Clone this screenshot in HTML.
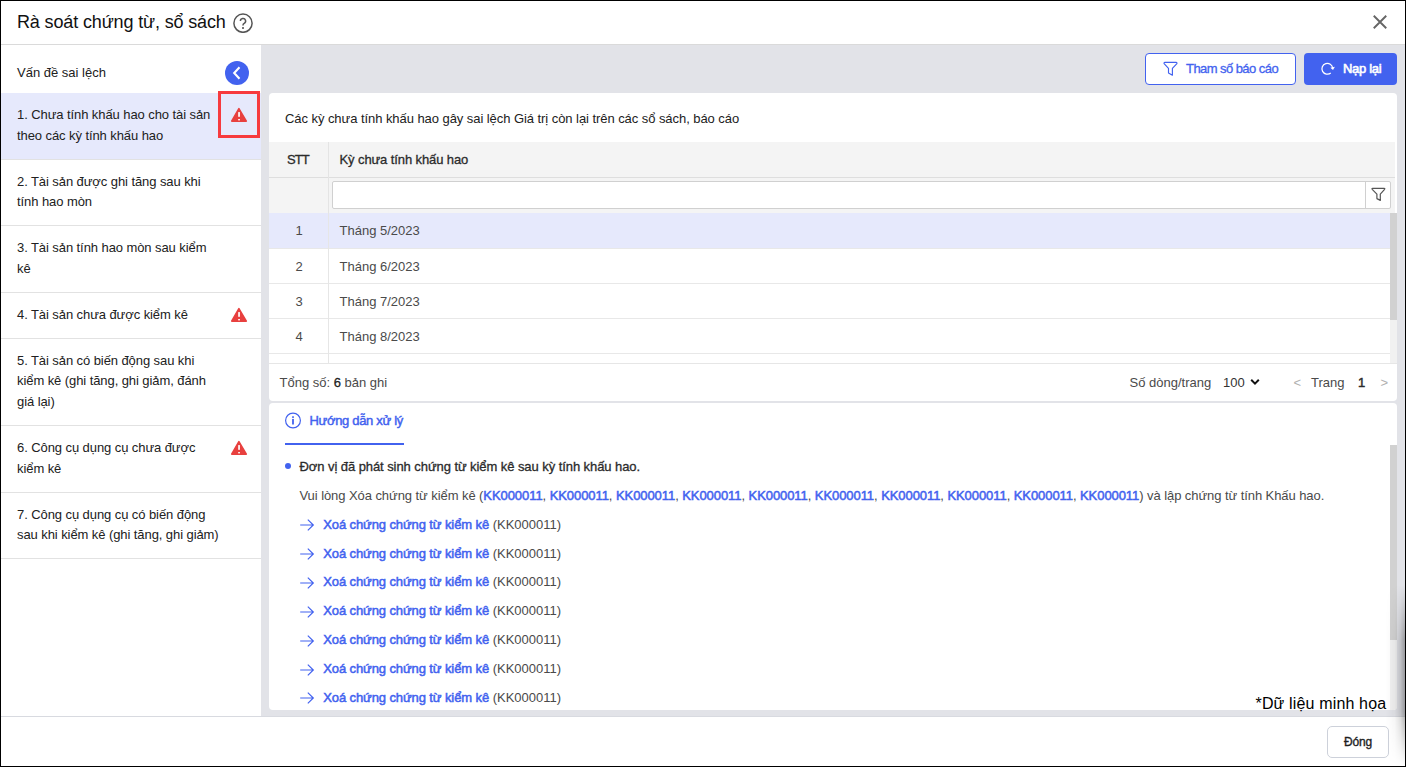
<!DOCTYPE html>
<html><head><meta charset="utf-8">
<style>
*{box-sizing:border-box;margin:0;padding:0}
html,body{width:1406px;height:767px;overflow:hidden;background:#fff}
body{position:relative;font-family:"Liberation Sans",sans-serif;font-size:13px;color:#212121}
.a{position:absolute}
.t{position:absolute;white-space:nowrap}
</style></head><body>
<!-- header -->
<svg class="a" style="left:233px;top:13px" width="20" height="20" viewBox="0 0 20 20"><circle cx="10" cy="10.2" r="9.1" fill="none" stroke="#555" stroke-width="1.5"/><path d="M7.4 8.1a2.6 2.6 0 1 1 3.8 2.3c-.8.5-1.2 1-1.2 1.8v.3" fill="none" stroke="#555" stroke-width="1.5"/><rect x="9.1" y="14.1" width="1.8" height="1.8" fill="#555"/></svg>
<svg class="a" style="left:1372px;top:14px" width="16" height="16" viewBox="0 0 16 16"><path d="M1.75 1.75L14.25 14.25M14.25 1.75L1.75 14.25" stroke="#666" stroke-width="1.9"/></svg>
<div class="a" style="left:1px;top:44px;width:1404px;height:1px;background:#DADADA"></div>
<!-- left panel -->
<svg class="a" style="left:225px;top:61px" width="24" height="24" viewBox="0 0 24 24"><circle cx="12" cy="12" r="12" fill="#4262EF"/><path d="M14.5 6.3L9.2 12l5.3 5.7" fill="none" stroke="#fff" stroke-width="2.1"/></svg>
<div class="a" style="left:1px;top:93px;width:260px;height:66.6px;background:#E6E9FC;border-bottom:1px solid #E2E2E2"></div><div class="a" style="left:1px;top:159.6px;width:260px;height:66.6px;border-bottom:1px solid #E2E2E2"></div><div class="a" style="left:1px;top:226.2px;width:260px;height:66.6px;border-bottom:1px solid #E2E2E2"></div><div class="a" style="left:1px;top:292.8px;width:260px;height:45.8px;border-bottom:1px solid #E2E2E2"></div><div class="a" style="left:1px;top:338.6px;width:260px;height:87.4px;border-bottom:1px solid #E2E2E2"></div><div class="a" style="left:1px;top:426.0px;width:260px;height:66.6px;border-bottom:1px solid #E2E2E2"></div><div class="a" style="left:1px;top:492.6px;width:260px;height:66.6px;border-bottom:1px solid #E2E2E2"></div>
<svg class="a" style="left:230px;top:107px" width="18" height="16" viewBox="0 0 18 16"><path d="M8.9 1.6L16.3 14.1H1.7Z" fill="#E8403F" stroke="#E8403F" stroke-width="1.6" stroke-linejoin="round"/><rect x="8.2" y="5.1" width="1.7" height="4.7" fill="#fff"/><rect x="8.2" y="12" width="1.7" height="1.4" fill="#fff"/></svg>
<svg class="a" style="left:230px;top:307px" width="18" height="16" viewBox="0 0 18 16"><path d="M8.9 1.6L16.3 14.1H1.7Z" fill="#E8403F" stroke="#E8403F" stroke-width="1.6" stroke-linejoin="round"/><rect x="8.2" y="5.1" width="1.7" height="4.7" fill="#fff"/><rect x="8.2" y="12" width="1.7" height="1.4" fill="#fff"/></svg>
<svg class="a" style="left:230px;top:440.3px" width="18" height="16" viewBox="0 0 18 16"><path d="M8.9 1.6L16.3 14.1H1.7Z" fill="#E8403F" stroke="#E8403F" stroke-width="1.6" stroke-linejoin="round"/><rect x="8.2" y="5.1" width="1.7" height="4.7" fill="#fff"/><rect x="8.2" y="12" width="1.7" height="1.4" fill="#fff"/></svg>
<div class="a" style="left:218px;top:91px;width:42px;height:47px;border:3px solid #F73A3E"></div>
<!-- main -->
<div class="a" style="left:261px;top:45px;width:1144px;height:671px;background:#E2E3E8"></div>
<div class="a" style="left:1145px;top:53px;width:151px;height:32px;border:1px solid #4262EF;border-radius:4px;background:#fff"></div>
<svg class="a" style="left:1163px;top:61px" width="15" height="15" viewBox="0 0 15 15"><path d="M1.9 1.4H13.1Q14.3 1.4 13.9 2.6L9.4 7.4V14.2L5.5 11.9V7.4L1.1 2.6Q0.7 1.4 1.9 1.4Z" fill="none" stroke="#4262EF" stroke-width="1.15" stroke-linejoin="round"/></svg>
<div class="a" style="left:1304px;top:53px;width:93px;height:32px;border-radius:4px;background:#4262EF"></div>
<svg class="a" style="left:1320px;top:61px" width="16" height="16" viewBox="0 0 16 16"><path d="M10.77 11.94A5.4 5.4 0 1 1 12.7 7.2" fill="none" stroke="#fff" stroke-width="1.25"/><path d="M10.4 6.7L14.9 5.8L13.0 9.1Z" fill="#fff"/></svg>
<!-- card 1 -->
<div class="a" style="left:269px;top:93px;width:1128px;height:308px;background:#fff;border-radius:4px;overflow:hidden">
  <div class="a" style="left:0;top:49px;width:1126px;height:71px;background:#F4F4F4"></div>
  <div class="a" style="left:0;top:84px;width:1126px;height:1px;background:#DEDEDE"></div>
  <div class="a" style="left:59px;top:49px;width:1px;height:71px;background:#E4E4E4"></div>
  <div class="a" style="left:63px;top:88px;width:1059px;height:28px;background:#fff;border:1px solid #D0D0D0;border-radius:2px"></div>
  <div class="a" style="left:1096px;top:88px;width:1px;height:28px;background:#D0D0D0"></div>
  <svg class="a" style="left:1102px;top:94px" width="15" height="15" viewBox="0 0 15 15"><path d="M1.6 1.3H13.2Q14.2 1.3 13.6 2.3L9.3 7.1V13.4L5.9 11.6V7.1L1.2 2.3Q0.6 1.3 1.6 1.3Z" fill="none" stroke="#555" stroke-width="1.2" stroke-linejoin="round"/></svg>
  <div class="a" style="left:0;top:120px;width:1128px;height:150px;overflow:hidden">
    <div class="a" style="left:0;top:0;width:1121px;height:35px;background:#E6E9FC"></div>
    <div class="a" style="left:0;top:35px;width:1121px;height:1px;background:#E8E8E8"></div>
    <div class="a" style="left:0;top:70px;width:1121px;height:1px;background:#E8E8E8"></div>
    <div class="a" style="left:0;top:105px;width:1121px;height:1px;background:#E8E8E8"></div>
    <div class="a" style="left:0;top:140px;width:1121px;height:1px;background:#E8E8E8"></div>
    <div class="a" style="left:59px;top:0;width:1px;height:150px;background:#E6E6E6"></div>
    <div class="a" style="left:1121px;top:0;width:7px;height:150px;background:#F1F1F1"></div>
    <div class="a" style="left:1121px;top:0;width:7px;height:107px;background:#D1D1D1"></div>
  </div>
  <div class="a" style="left:0;top:270px;width:1128px;height:1px;background:#E6E6E6"></div>
  <svg class="a" style="left:981px;top:284px" width="10" height="10" viewBox="0 0 10 10"><path d="M1.2 2.8L5 6.6L8.8 2.8" fill="none" stroke="#111" stroke-width="2"/></svg>
</div>
<!-- card 2 -->
<div class="a" style="left:269px;top:403px;width:1128px;height:307px;background:#fff;border-radius:4px;overflow:hidden">
  <svg class="a" style="left:15px;top:9px" width="17" height="17" viewBox="0 0 17 17"><circle cx="9" cy="8.5" r="7.4" fill="none" stroke="#4262EF" stroke-width="1.2"/><rect x="8.1" y="6.9" width="1.8" height="5.6" fill="#4262EF"/><rect x="8.1" y="4.3" width="1.8" height="1.6" fill="#4262EF"/></svg>
  <div class="a" style="left:16px;top:40px;width:119px;height:2px;background:#4262EF"></div>
  <div class="a" style="left:16px;top:60px;width:6px;height:6px;border-radius:50%;background:#4262EF"></div>
  <div class="a" style="left:1121px;top:42px;width:7px;height:265px;background:#F1F1F1"></div>
  <div class="a" style="left:1121px;top:42px;width:7px;height:195px;background:#D1D1D1"></div>
</div>
<svg class="a" style="left:299px;top:518.20px" width="16" height="14" viewBox="0 0 16 14"><path d="M1.2 7H14.3M8.8 1.6L14.3 7L8.8 12.4" fill="none" stroke="#4262EF" stroke-width="1.2"/></svg><svg class="a" style="left:299px;top:547.08px" width="16" height="14" viewBox="0 0 16 14"><path d="M1.2 7H14.3M8.8 1.6L14.3 7L8.8 12.4" fill="none" stroke="#4262EF" stroke-width="1.2"/></svg><svg class="a" style="left:299px;top:575.96px" width="16" height="14" viewBox="0 0 16 14"><path d="M1.2 7H14.3M8.8 1.6L14.3 7L8.8 12.4" fill="none" stroke="#4262EF" stroke-width="1.2"/></svg><svg class="a" style="left:299px;top:604.84px" width="16" height="14" viewBox="0 0 16 14"><path d="M1.2 7H14.3M8.8 1.6L14.3 7L8.8 12.4" fill="none" stroke="#4262EF" stroke-width="1.2"/></svg><svg class="a" style="left:299px;top:633.72px" width="16" height="14" viewBox="0 0 16 14"><path d="M1.2 7H14.3M8.8 1.6L14.3 7L8.8 12.4" fill="none" stroke="#4262EF" stroke-width="1.2"/></svg><svg class="a" style="left:299px;top:662.60px" width="16" height="14" viewBox="0 0 16 14"><path d="M1.2 7H14.3M8.8 1.6L14.3 7L8.8 12.4" fill="none" stroke="#4262EF" stroke-width="1.2"/></svg><svg class="a" style="left:299px;top:691.48px" width="16" height="14" viewBox="0 0 16 14"><path d="M1.2 7H14.3M8.8 1.6L14.3 7L8.8 12.4" fill="none" stroke="#4262EF" stroke-width="1.2"/></svg>
<!-- footer -->
<div class="a" style="left:1px;top:716px;width:1404px;height:1px;background:#D8DAE0"></div>
<div class="a" style="left:1327px;top:726px;width:62px;height:31.5px;border:1px solid #CDD1DA;border-radius:5px;background:#fff"></div>
<div class="t" style="left:17px;top:13.00px;font-size:18px;line-height:18px;color:#111;letter-spacing:-0.14px;">Rà soát chứng từ, sổ sách</div><div class="t" style="left:17px;top:66.00px;font-size:13px;line-height:13px;color:#212121;">Vấn đề sai lệch</div><div class="t" style="left:17px;top:108.00px;font-size:13px;line-height:13px;color:#212121;letter-spacing:-0.08px;">1. Chưa tính khấu hao cho tài sản</div><div class="t" style="left:17px;top:128.80px;font-size:13px;line-height:13px;color:#212121;letter-spacing:-0.08px;">theo các kỳ tính khấu hao</div><div class="t" style="left:17px;top:174.60px;font-size:13px;line-height:13px;color:#212121;letter-spacing:-0.08px;">2. Tài sản được ghi tăng sau khi</div><div class="t" style="left:17px;top:195.40px;font-size:13px;line-height:13px;color:#212121;letter-spacing:-0.08px;">tính hao mòn</div><div class="t" style="left:17px;top:241.20px;font-size:13px;line-height:13px;color:#212121;letter-spacing:-0.08px;">3. Tài sản tính hao mòn sau kiểm</div><div class="t" style="left:17px;top:262.00px;font-size:13px;line-height:13px;color:#212121;letter-spacing:-0.08px;">kê</div><div class="t" style="left:17px;top:307.80px;font-size:13px;line-height:13px;color:#212121;letter-spacing:-0.08px;">4. Tài sản chưa được kiểm kê</div><div class="t" style="left:17px;top:353.60px;font-size:13px;line-height:13px;color:#212121;letter-spacing:-0.08px;">5. Tài sản có biến động sau khi</div><div class="t" style="left:17px;top:374.40px;font-size:13px;line-height:13px;color:#212121;letter-spacing:-0.08px;">kiểm kê (ghi tăng, ghi giảm, đánh</div><div class="t" style="left:17px;top:395.20px;font-size:13px;line-height:13px;color:#212121;letter-spacing:-0.08px;">giá lại)</div><div class="t" style="left:17px;top:441.00px;font-size:13px;line-height:13px;color:#212121;letter-spacing:-0.08px;">6. Công cụ dụng cụ chưa được</div><div class="t" style="left:17px;top:461.80px;font-size:13px;line-height:13px;color:#212121;letter-spacing:-0.08px;">kiểm kê</div><div class="t" style="left:17px;top:507.60px;font-size:13px;line-height:13px;color:#212121;letter-spacing:-0.08px;">7. Công cụ dụng cụ có biến động</div><div class="t" style="left:17px;top:528.40px;font-size:13px;line-height:13px;color:#212121;letter-spacing:-0.08px;">sau khi kiểm kê (ghi tăng, ghi giảm)</div><div class="t" style="left:1186px;top:62.00px;font-size:13px;line-height:13px;color:#4262EF;letter-spacing:-0.56px;-webkit-text-stroke-width:0.3px;">Tham số báo cáo</div><div class="t" style="left:1343px;top:62.00px;font-size:13px;line-height:13px;color:#fff;letter-spacing:-0.3px;-webkit-text-stroke-width:0.6px;">Nạp lại</div><div class="t" style="left:285px;top:112.00px;font-size:13px;line-height:13px;color:#212121;letter-spacing:-0.06px;">Các kỳ chưa tính khấu hao gây sai lệch Giá trị còn lại trên các sổ sách, báo cáo</div><div class="t" style="left:287px;top:153.00px;font-size:13px;line-height:13px;color:#2b2b2b;letter-spacing:-0.9px;-webkit-text-stroke-width:0.3px;">STT</div><div class="t" style="left:339.5px;top:153.00px;font-size:13px;line-height:13px;color:#2b2b2b;letter-spacing:-0.1px;-webkit-text-stroke-width:0.3px;">Kỳ chưa tính khấu hao</div><div class="t" style="left:295.5px;top:224.00px;font-size:13px;line-height:13px;color:#4a4a4a;">1</div><div class="t" style="left:339.5px;top:224.00px;font-size:13px;line-height:13px;color:#4a4a4a;">Tháng 5/2023</div><div class="t" style="left:295.5px;top:260.00px;font-size:13px;line-height:13px;color:#4a4a4a;">2</div><div class="t" style="left:339.5px;top:260.00px;font-size:13px;line-height:13px;color:#4a4a4a;">Tháng 6/2023</div><div class="t" style="left:295.5px;top:295.00px;font-size:13px;line-height:13px;color:#4a4a4a;">3</div><div class="t" style="left:339.5px;top:295.00px;font-size:13px;line-height:13px;color:#4a4a4a;">Tháng 7/2023</div><div class="t" style="left:295.5px;top:330.00px;font-size:13px;line-height:13px;color:#4a4a4a;">4</div><div class="t" style="left:339.5px;top:330.00px;font-size:13px;line-height:13px;color:#4a4a4a;">Tháng 8/2023</div><div class="t" style="left:279.5px;top:376.00px;font-size:13px;line-height:13px;color:#4a4a4a;">Tổng số: <span style="-webkit-text-stroke-width:0.3px;color:#222">6</span> bản ghi</div><div class="t" style="left:1129.5px;top:376.00px;font-size:13px;line-height:13px;color:#4a4a4a;">Số dòng/trang</div><div class="t" style="left:1223px;top:376.00px;font-size:13px;line-height:13px;color:#333;">100</div><div class="t" style="left:1293.5px;top:376.00px;font-size:13px;line-height:13px;color:#b0b0b0;">&lt;</div><div class="t" style="left:1311px;top:376.00px;font-size:13px;line-height:13px;color:#4a4a4a;">Trang</div><div class="t" style="left:1358px;top:376.00px;font-size:13px;line-height:13px;color:#2b2b2b;-webkit-text-stroke-width:0.45px;">1</div><div class="t" style="left:1380.5px;top:376.00px;font-size:13px;line-height:13px;color:#b0b0b0;">&gt;</div><div class="t" style="left:309.5px;top:414.00px;font-size:13px;line-height:13px;color:#4262EF;letter-spacing:-0.32px;-webkit-text-stroke-width:0.45px;">Hướng dẫn xử lý</div><div class="t" style="left:299.5px;top:459.50px;font-size:13px;line-height:13px;color:#2b2b2b;letter-spacing:-0.07px;-webkit-text-stroke-width:0.3px;">Đơn vị đã phát sinh chứng từ kiểm kê sau kỳ tính khấu hao.</div><div class="t" style="left:299.5px;top:489.00px;font-size:13px;line-height:13px;color:#4a4a4a;letter-spacing:-0.07px;">Vui lòng Xóa chứng từ kiểm kê (<span style="color:#4262EF;-webkit-text-stroke-width:0.5px">KK000011</span>, <span style="color:#4262EF;-webkit-text-stroke-width:0.5px">KK000011</span>, <span style="color:#4262EF;-webkit-text-stroke-width:0.5px">KK000011</span>, <span style="color:#4262EF;-webkit-text-stroke-width:0.5px">KK000011</span>, <span style="color:#4262EF;-webkit-text-stroke-width:0.5px">KK000011</span>, <span style="color:#4262EF;-webkit-text-stroke-width:0.5px">KK000011</span>, <span style="color:#4262EF;-webkit-text-stroke-width:0.5px">KK000011</span>, <span style="color:#4262EF;-webkit-text-stroke-width:0.5px">KK000011</span>, <span style="color:#4262EF;-webkit-text-stroke-width:0.5px">KK000011</span>, <span style="color:#4262EF;-webkit-text-stroke-width:0.5px">KK000011</span>) và lập chứng từ tính Khấu hao.</div><div class="t" style="left:323.2px;top:517.70px;font-size:13px;line-height:13px;color:#4a4a4a;"><span style="color:#4262EF;-webkit-text-stroke-width:0.5px;letter-spacing:-0.1px">Xoá chứng chứng từ kiểm kê</span> (KK000011)</div><div class="t" style="left:323.2px;top:546.58px;font-size:13px;line-height:13px;color:#4a4a4a;"><span style="color:#4262EF;-webkit-text-stroke-width:0.5px;letter-spacing:-0.1px">Xoá chứng chứng từ kiểm kê</span> (KK000011)</div><div class="t" style="left:323.2px;top:575.46px;font-size:13px;line-height:13px;color:#4a4a4a;"><span style="color:#4262EF;-webkit-text-stroke-width:0.5px;letter-spacing:-0.1px">Xoá chứng chứng từ kiểm kê</span> (KK000011)</div><div class="t" style="left:323.2px;top:604.34px;font-size:13px;line-height:13px;color:#4a4a4a;"><span style="color:#4262EF;-webkit-text-stroke-width:0.5px;letter-spacing:-0.1px">Xoá chứng chứng từ kiểm kê</span> (KK000011)</div><div class="t" style="left:323.2px;top:633.22px;font-size:13px;line-height:13px;color:#4a4a4a;"><span style="color:#4262EF;-webkit-text-stroke-width:0.5px;letter-spacing:-0.1px">Xoá chứng chứng từ kiểm kê</span> (KK000011)</div><div class="t" style="left:323.2px;top:662.10px;font-size:13px;line-height:13px;color:#4a4a4a;"><span style="color:#4262EF;-webkit-text-stroke-width:0.5px;letter-spacing:-0.1px">Xoá chứng chứng từ kiểm kê</span> (KK000011)</div><div class="t" style="left:323.2px;top:690.98px;font-size:13px;line-height:13px;color:#4a4a4a;"><span style="color:#4262EF;-webkit-text-stroke-width:0.5px;letter-spacing:-0.1px">Xoá chứng chứng từ kiểm kê</span> (KK000011)</div><div class="t" style="left:1255.5px;top:695.50px;font-size:16px;line-height:16px;color:#000;letter-spacing:0.155px;">*Dữ liệu minh họa</div><div class="t" style="left:1344px;top:735.50px;font-size:12px;line-height:12px;color:#1e1e1e;letter-spacing:-0.2px;-webkit-text-stroke-width:0.35px;">Đóng</div>
<div class="a" style="left:1386px;top:585px;width:19px;height:181px;background:linear-gradient(to right,rgba(0,0,0,0) 0%,rgba(0,0,0,.04) 45%,rgba(0,0,0,.14) 75%,rgba(0,0,0,.32) 100%);-webkit-mask-image:linear-gradient(to bottom,transparent 0%,#000 30%,#000 70%,transparent 100%)"></div>
<div class="a" style="left:0;top:0;width:1406px;height:767px;border:1px solid #000"></div>
</body></html>
